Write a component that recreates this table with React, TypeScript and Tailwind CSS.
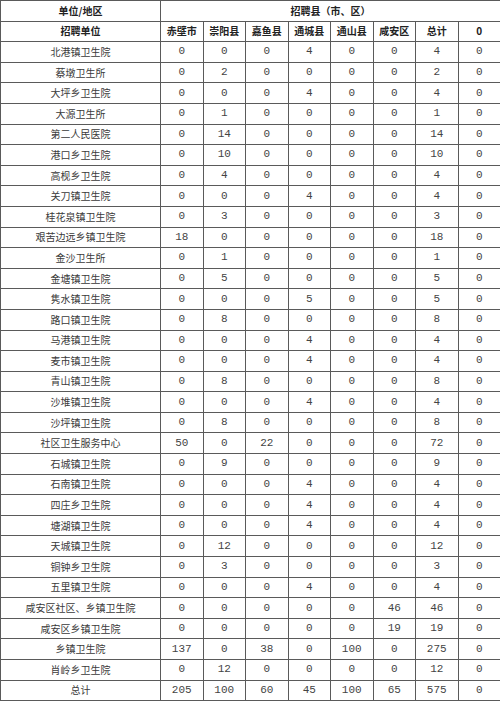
const counties = ['赤壁市', '崇阳县', '嘉鱼县', '通城县', '通山县', '咸安区', '总计', '0'];

// [单位, 赤壁市, 崇阳县, 嘉鱼县, 通城县, 通山县, 咸安区, 总计, 0]
const rows: [string, ...number[]][] = [
  ['北港镇卫生院', 0, 0, 0, 4, 0, 0, 4, 0],
  ['蔡墩卫生所', 0, 2, 0, 0, 0, 0, 2, 0],
  ['大坪乡卫生院', 0, 0, 0, 4, 0, 0, 4, 0],
  ['大源卫生所', 0, 1, 0, 0, 0, 0, 1, 0],
  ['第二人民医院', 0, 14, 0, 0, 0, 0, 14, 0],
  ['港口乡卫生院', 0, 10, 0, 0, 0, 0, 10, 0],
  ['高枧乡卫生院', 0, 4, 0, 0, 0, 0, 4, 0],
  ['关刀镇卫生院', 0, 0, 0, 4, 0, 0, 4, 0],
  ['桂花泉镇卫生院', 0, 3, 0, 0, 0, 0, 3, 0],
  ['艰苦边远乡镇卫生院', 18, 0, 0, 0, 0, 0, 18, 0],
  ['金沙卫生所', 0, 1, 0, 0, 0, 0, 1, 0],
  ['金塘镇卫生院', 0, 5, 0, 0, 0, 0, 5, 0],
  ['隽水镇卫生院', 0, 0, 0, 5, 0, 0, 5, 0],
  ['路口镇卫生院', 0, 8, 0, 0, 0, 0, 8, 0],
  ['马港镇卫生院', 0, 0, 0, 4, 0, 0, 4, 0],
  ['麦市镇卫生院', 0, 0, 0, 4, 0, 0, 4, 0],
  ['青山镇卫生院', 0, 8, 0, 0, 0, 0, 8, 0],
  ['沙堆镇卫生院', 0, 0, 0, 4, 0, 0, 4, 0],
  ['沙坪镇卫生院', 0, 8, 0, 0, 0, 0, 8, 0],
  ['社区卫生服务中心', 50, 0, 22, 0, 0, 0, 72, 0],
  ['石城镇卫生院', 0, 9, 0, 0, 0, 0, 9, 0],
  ['石南镇卫生院', 0, 0, 0, 4, 0, 0, 4, 0],
  ['四庄乡卫生院', 0, 0, 0, 4, 0, 0, 4, 0],
  ['塘湖镇卫生院', 0, 0, 0, 4, 0, 0, 4, 0],
  ['天城镇卫生院', 0, 12, 0, 0, 0, 0, 12, 0],
  ['铜钟乡卫生院', 0, 3, 0, 0, 0, 0, 3, 0],
  ['五里镇卫生院', 0, 0, 0, 4, 0, 0, 4, 0],
  ['咸安区社区、乡镇卫生院', 0, 0, 0, 0, 0, 46, 46, 0],
  ['咸安区乡镇卫生院', 0, 0, 0, 0, 0, 19, 19, 0],
  ['乡镇卫生院', 137, 0, 38, 0, 100, 0, 275, 0],
  ['肖岭乡卫生院', 0, 12, 0, 0, 0, 0, 12, 0],
  ['总计', 205, 100, 60, 45, 100, 65, 575, 0],
];

const cell = 'border border-[#5a5a5a] text-center align-middle p-0 leading-none';
const cjk = "font-['Noto_Sans_CJK_SC',sans-serif]";
const head = `${cell} ${cjk} font-bold text-[#222]`;

export default function App() {
  return (
    <div className="w-[500px] h-[701px] bg-white overflow-hidden">
      <table className="w-[500px] table-fixed border-collapse text-[10px] text-[#3a3a3a]">
        <colgroup>
          <col className="w-[160px]" />
          {counties.map((c) => (
            <col key={c} className="w-[42.5px]" />
          ))}
        </colgroup>
        <thead>
          <tr className="h-[20.6px]">
            <th className={head}>单位/地区</th>
            <th colSpan={8} className={head}>
              招聘县（市、区）
            </th>
          </tr>
          <tr className="h-[20.6px]">
            <th className={head}>招聘单位</th>
            {counties.map((c) => (
              <th key={c} className={head}>
                {c}
              </th>
            ))}
          </tr>
        </thead>
        <tbody>
          {rows.map(([name, ...nums]) => (
            <tr key={name} className="h-[20.6px]">
              <td className={`${cell} ${cjk}`}>{name}</td>
              {nums.map((n, i) => (
                <td key={i} className={`${cell} font-['Liberation_Mono',monospace] text-[11px] text-[#444]`}>
                  {n}
                </td>
              ))}
            </tr>
          ))}
        </tbody>
      </table>
    </div>
  );
}
